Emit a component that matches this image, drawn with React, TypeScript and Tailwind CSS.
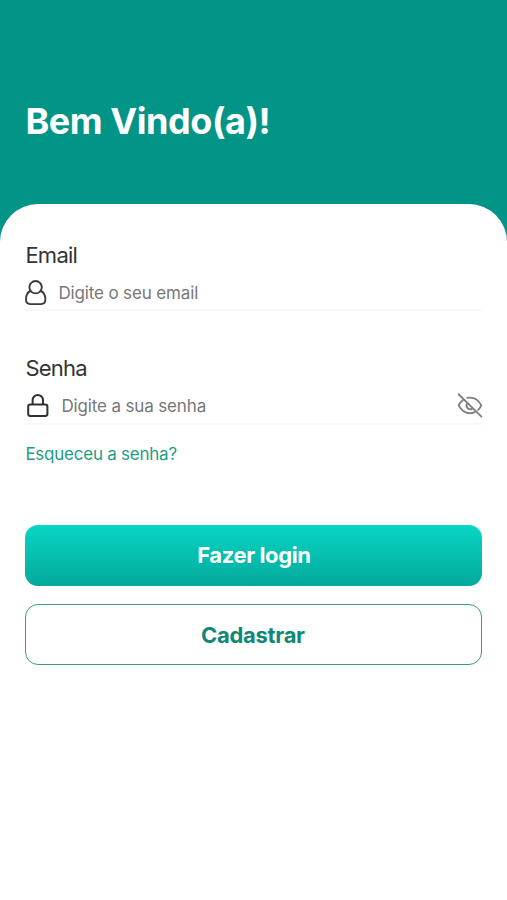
import React, { useState } from 'react';

function UserIcon() {
  return (
    <svg className="h-[26px] w-[22px] shrink-0" viewBox="0 0 22 26" fill="none" stroke="#3a3a3a" strokeWidth={1.9}>
      <circle cx="10.6" cy="7.2" r="6.2" />
      <path
        strokeLinecap="round"
        strokeLinejoin="round"
        d="M5.5 11C2.4 12.2 1 15.6 1 19.6C1 22.6 2.6 24.1 5.2 24.1H16C18.6 24.1 20.4 22.6 20.4 19.6C20.4 15.6 18.8 12.2 15.7 11"
      />
    </svg>
  );
}

function LockIcon() {
  return (
    <svg className="h-6 w-[22px] shrink-0" viewBox="0 0 22 24" fill="none" stroke="#2f2f2f" strokeWidth={2} strokeLinejoin="round">
      <rect x="1.2" y="10.4" width="19.2" height="11.6" rx="2.2" />
      <path d="M5.6 10.4V6.2a5.2 5.2 0 0 1 10.4 0v4.2" />
    </svg>
  );
}

function EyeOffIcon() {
  return (
    <svg className="h-[26px] w-[26px] overflow-visible" viewBox="0 0 26 26" fill="none" stroke="#808080" strokeWidth={1.9} strokeLinecap="round">
      <path d="M2.6 1.2L25.4 23.6" />
      <path d="M11.2 4.9C17.1 3.7 22.3 6.6 25.3 12.4C24.6 14.2 23.5 15.7 22.1 16.9" />
      <path d="M7 7C5.2 8.3 3.8 10.1 2.7 12.4C6.2 19.3 12.8 22 18.7 19.1" />
      <path d="M11 10.6A3.8 3.8 0 0 0 16.1 15.8" />
    </svg>
  );
}

export default function App() {
  const [hidden, setHidden] = useState(true);

  return (
    <div className="flex min-h-screen w-full flex-col bg-[#029487] font-['Inter','Liberation_Sans',sans-serif]">
      <header className="h-[204px] px-[25.5px] pt-[98px]">
        <h1 className="text-[36px] font-bold leading-[46px] tracking-[-0.45px] text-white">Bem Vindo(a)!</h1>
      </header>

      <main className="flex-1 rounded-t-[38px] bg-white pl-[25.4px] pr-[24.6px] pt-[37px]">
        {/* Email */}
        <label htmlFor="email" className="block text-[22px] leading-7 tracking-[-0.75px] text-[#333333]">
          Email
        </label>
        <div className="mt-[7px] flex h-[35px] items-center border-b-2 border-[#f8f8f8]">
          <UserIcon />
          <input
            id="email"
            type="email"
            placeholder="Digite o seu email"
            className="ml-[11px] min-w-0 flex-1 bg-transparent pt-[2px] text-[17px] tracking-[-0.14px] outline-none placeholder:text-[#777777]"
          />
        </div>

        {/* Senha */}
        <label htmlFor="senha" className="mt-[43px] block text-[22px] leading-7 tracking-[-0.75px] text-[#333333]">
          Senha
        </label>
        <div className="mt-[7px] flex h-9 items-center border-b-2 border-[#f8f8f8]">
          <div className="pl-[2px]">
            <LockIcon />
          </div>
          <input
            id="senha"
            type={hidden ? 'password' : 'text'}
            placeholder="Digite a sua senha"
            className="ml-3 min-w-0 flex-1 bg-transparent pt-px text-[17px] tracking-[-0.14px] outline-none placeholder:text-[#777777]"
          />
          <button type="button" onClick={() => setHidden(!hidden)} aria-label="Mostrar senha">
            <EyeOffIcon />
          </button>
        </div>

        <a href="#" className="mt-[17px] block w-fit text-[17px] leading-6 tracking-[-0.24px] text-[#1f9d84]">
          Esqueceu a senha?
        </a>

        <button
          type="button"
          className="mt-[59px] h-[61px] w-full rounded-[13px] bg-linear-to-b from-[#09d6c5] to-[#03a99b] text-[22px] font-bold tracking-[-0.4px] text-white"
        >
          Fazer login
        </button>
        <button
          type="button"
          className="mt-[18px] h-[61px] w-full rounded-[13px] border border-[#3a9c83] pr-[2px] pt-[2px] text-[22px] font-bold tracking-[-0.3px] text-[#108876]"
        >
          Cadastrar
        </button>
      </main>
    </div>
  );
}
